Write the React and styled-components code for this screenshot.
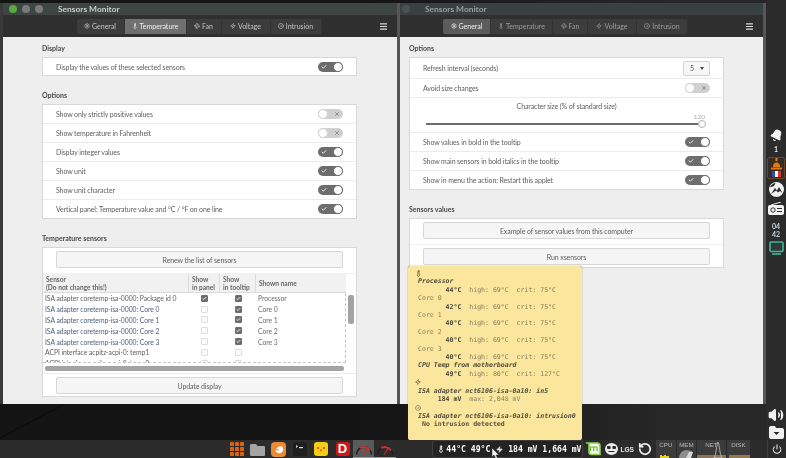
import React from 'react';
import styled, { createGlobalStyle } from 'styled-components';
import { Settings, Thermometer, Fan, Zap, CircleDot, Menu, Check, X, Bell, RotateCcw, Power, Volume2 } from 'lucide-react';

const uiFont = 'Lato, "Noto Sans", sans-serif';
const monoFont = '"DejaVu Sans Mono", "Liberation Mono", monospace';

const GlobalStyle = createGlobalStyle`
  html, body { margin: 0; padding: 0; background: #151515; }
  body { font-family: ${uiFont}; overflow: hidden; }
`;

const Desktop = styled.div`
  position: relative;
  width: 786px;
  height: 458px;
  overflow: hidden;
  display: grid;
  grid-template-columns: 766px 20px;
  grid-template-rows: 440px 18px;
  background:
    linear-gradient(152deg, transparent 49.9%, #0a0a0a 50%, transparent 50.2%),
    linear-gradient(90deg, #141414 45%, #272727 85%);
  filter: blur(0.3px);
`;

const Workspace = styled.main`
  position: relative;
`;

const WindowFrame = styled.section`
  position: absolute;
  top: 3px;
  left: ${(p) => p.$left}px;
  width: ${(p) => p.$width}px;
  height: 401px;
  z-index: ${(p) => (p.$active ? 2 : 1)};
  display: flex;
  flex-direction: column;
  background: #eeeeee;
  box-shadow: -3px 0 0 #3a3a3a, 3px 0 0 #565656;
`;

const TitleBar = styled.header`
  height: 12px;
  display: flex;
  align-items: center;
  padding-left: 6px;
  background: ${(p) => (p.$active ? '#3e4644' : '#38413f')};
`;

const Dot = styled.span`
  width: 8px;
  height: 8px;
  border-radius: 50%;
  margin-right: 5px;
  background: ${(p) => p.$color};
`;

const Title = styled.span`
  margin-left: 10px;
  font-size: 8.4px;
  font-weight: 700;
  color: ${(p) => (p.$active ? '#c9cdcb' : '#9a9f9d')};
`;

const HeaderBar = styled.div`
  height: 22px;
  display: grid;
  grid-template-columns: 1fr auto 1fr;
  align-items: center;
  padding-right: 2px;
  background: #2f2f2f;
`;

const Tabs = styled.nav`
  grid-column: 2;
  display: flex;
  height: 15px;
  border-radius: 2px;
  overflow: hidden;
  background: #3c3c3c;
`;

const Tab = styled.div`
  width: ${(p) => p.$width}px;
  display: flex;
  align-items: center;
  justify-content: center;
  gap: 2px;
  font-size: 7px;
  color: ${(p) => (p.$selected ? '#f0f0f0' : p.$dim ? '#9c9c9c' : '#c4c4c4')};
  background: ${(p) => (p.$selected ? (p.$dim ? '#5c5c5c' : '#707070') : 'transparent')};
  border-right: 1px solid #333;
`;

const Hamburger = styled.div`
  grid-column: 3;
  justify-self: end;
  margin-right: 7px;
  display: flex;
  color: #dddddd;
`;

const Body = styled.div`
  flex: 1;
  display: flex;
  flex-direction: column;
  gap: 14px;
  padding: 6px 0 0 39px;
`;

const Section = styled.div`
  display: flex;
  flex-direction: column;
`;

const Heading = styled.h3`
  margin: 0 0 4px;
  font-size: 7px;
  line-height: 10px;
  font-weight: 700;
  color: #4a4a4a;
`;

const Frame = styled.div`
  width: 315px;
  box-sizing: border-box;
  background: #ffffff;
  border: 1px solid #d8d8d8;
`;

const Row = styled.div`
  height: ${(p) => p.$height || 19}px;
  box-sizing: border-box;
  display: flex;
  align-items: center;
  justify-content: space-between;
  padding: 0 13px;
  font-size: 7px;
  letter-spacing: -0.12px;
  color: #5f5f5f;
  border-bottom: 1px solid #ececec;
  &:last-child { border-bottom: 0; height: ${(p) => (p.$height || 19) - 1}px; }
`;

const SwitchTrack = styled.span`
  width: 25px;
  height: 10px;
  border-radius: 5px;
  display: flex;
  align-items: center;
  justify-content: space-between;
  flex-direction: ${(p) => (p.$on ? 'row' : 'row-reverse')};
  box-sizing: border-box;
  padding-left: ${(p) => (p.$on ? 3 : 0)}px;
  padding-right: ${(p) => (p.$on ? 0 : 3)}px;
  background: ${(p) => (p.$on ? '#6d6d6d' : '#d0d0d0')};
  color: ${(p) => (p.$on ? '#ffffff' : '#777777')};
`;

const Knob = styled.span`
  width: 10px;
  height: 10px;
  border-radius: 50%;
  box-sizing: border-box;
  background: #ffffff;
  border: 1px solid ${(p) => (p.$on ? '#6d6d6d' : '#d0d0d0')};
`;

const Switch = ({ on }) => (
  <SwitchTrack $on={on}>
    {on ? <Check size={6} strokeWidth={3.5} /> : <X size={6} strokeWidth={3} />}
    <Knob $on={on} />
  </SwitchTrack>
);

const SelectBox = styled.div`
  width: 27px;
  height: 15px;
  box-sizing: border-box;
  display: flex;
  align-items: center;
  justify-content: space-between;
  padding: 0 5px 0 6px;
  border: 1px solid #d4d4d4;
  border-radius: 2px;
  background: #f7f7f7;
  color: #555555;
`;

const SelectCaret = styled.span`
  width: 0;
  height: 0;
  border-left: 2.5px solid transparent;
  border-right: 2.5px solid transparent;
  border-top: 3px solid #444444;
`;

const SliderRow = styled.div`
  height: 35px;
  box-sizing: border-box;
  padding-top: 3px;
  border-bottom: 1px solid #ececec;
`;

const SliderLabel = styled.div`
  font-size: 7px;
  letter-spacing: -0.12px;
  line-height: 10px;
  text-align: center;
  color: #5f5f5f;
`;

const SliderValue = styled.div`
  width: 279px;
  margin: 2px 0 0 16px;
  font-size: 6.5px;
  line-height: 8px;
  text-align: right;
  color: #aaaaaa;
`;

const SliderTrack = styled.div`
  position: relative;
  width: 276px;
  height: 2px;
  margin: 2px 0 0 16px;
  background: #6d6d6d;
`;

const SliderHandle = styled.span`
  position: absolute;
  right: -4px;
  top: -3px;
  width: 8px;
  height: 8px;
  border-radius: 50%;
  box-sizing: border-box;
  background: #fafafa;
  border: 1px solid #b5b5b5;
`;

const ButtonRow = styled.div`
  padding: 3px 13px 5px;
  &:last-child { padding-bottom: 2px; }
  border-bottom: 1px solid #f2f2f2;
  &:last-child { border-bottom: 0; }
`;

const Button = styled.div`
  height: 17px;
  box-sizing: border-box;
  display: flex;
  align-items: center;
  justify-content: center;
  font-size: 7px;
  letter-spacing: -0.1px;
  color: #5f5f5f;
  background: #f5f5f5;
  border: 1px solid #d6d6d6;
  border-radius: 2px;
`;

const TableBlock = styled.div`
  height: 100px;
  box-sizing: border-box;
  border-bottom: 1px solid #ececec;
`;

const TableTop = styled.div`
  display: flex;
  height: 89px;
`;

const TableView = styled.div`
  width: 303px;
  height: 89px;
  overflow: hidden;
  display: flex;
  flex-direction: column;
`;

const tableColumns = '146px 31px 36px 90px';

const TableHead = styled.div`
  flex: none;
  height: 19px;
  display: grid;
  grid-template-columns: ${tableColumns};
  background: #f1f1f1;
  border-bottom: 1px solid #dcdcdc;
  box-sizing: border-box;
`;

const HeadCell = styled.div`
  display: flex;
  flex-direction: column;
  justify-content: center;
  padding-left: 3px;
  font-size: 6.6px;
  line-height: 8px;
  font-weight: 700;
  white-space: nowrap;
  color: #666666;
  border-right: 1px solid #dcdcdc;
  &:last-child { border-right: 0; }
`;

const TableBody = styled.div`
  flex: 1;
  overflow: hidden;
  border-right: 1px dashed #c4c4c4;
  border-bottom: 1px dashed #c4c4c4;
`;

const TableRow = styled.div`
  height: 10.8px;
  display: grid;
  grid-template-columns: ${tableColumns};
  align-items: center;
  font-size: 6.8px;
  letter-spacing: -0.06px;
  color: ${(p) => (p.$link ? '#50617c' : '#5f5f5f')};
`;

const SensorCell = styled.span`
  padding-left: 2px;
  white-space: nowrap;
`;

const CheckCell = styled.span`
  display: flex;
  justify-content: center;
`;

const NameCell = styled.span`
  padding-left: 2px;
  color: #6d6d6d;
`;

const CheckBox = styled.span`
  width: 7px;
  height: 7px;
  box-sizing: border-box;
  display: flex;
  align-items: center;
  justify-content: center;
  border-radius: 1px;
  color: #ffffff;
  background: ${(p) => (p.$on ? '#6d6d6d' : '#fbfbfb')};
  border: 1px solid ${(p) => (p.$on ? '#6d6d6d' : '#dddddd')};
`;

const VThumb = styled.div`
  width: 6px;
  height: 29px;
  margin: 21px 0 0 2px;
  border-radius: 2px;
  background: #a3a3a3;
`;

const HThumb = styled.div`
  width: 299px;
  height: 5px;
  margin: 3px 0 0 2px;
  border-radius: 2px;
  background: #a3a3a3;
`;

const Tooltip = styled.aside`
  position: absolute;
  left: 408px;
  top: 266px;
  z-index: 3;
  width: 174px;
  height: 174px;
  box-sizing: border-box;
  padding: 3px 0 0 10px;
  background: #fbe69d;
  border-radius: 2px;
  box-shadow: 0 0 1px #333;
  font-family: ${monoFont};
  font-size: 6.55px;
`;

const TipLine = styled.div`
  height: 8.42px;
  line-height: 8.42px;
  white-space: pre;
  color: #85805f;
  font-style: ${(p) => (p.$main ? 'italic' : 'normal')};
  font-weight: ${(p) => (p.$main || p.$bold ? 700 : 400)};
  ${(p) => p.$main && 'color: #4f4c3d;'}
  ${(p) => p.$bold && 'color: #55523f;'}
`;

const TipIcon = styled.div`
  height: 8.42px;
  margin-left: -3px;
  display: flex;
  align-items: center;
  color: #55523f;
`;

const TipValue = styled.b`
  color: #45433a;
`;

const SidePanel = styled.aside`
  grid-row: 1;
  grid-column: 2;
  display: flex;
  flex-direction: column;
  align-items: center;
  padding-top: 129px;
  background: #2b2b2b;
  color: #f2f2f2;
`;

const SideCount = styled.span`
  margin-top: 3px;
  font-size: 7px;
  line-height: 8px;
  font-weight: 700;
  color: #dfe4ea;
`;

const StationBox = styled.div`
  width: 18px;
  height: 22px;
  margin-top: 4px;
  box-sizing: border-box;
  display: flex;
  flex-direction: column;
  align-items: center;
  border: 1px solid #6b4526;
  border-radius: 2px;
  background: #352c24;
`;

const SideClock = styled.span`
  margin-top: 7px;
  font-size: 7px;
  line-height: 8px;
  font-weight: 700;
  text-align: center;
  color: #c6d2de;
`;

const SideBottom = styled.div`
  margin-top: auto;
  padding-bottom: 1.5px;
  display: flex;
  flex-direction: column;
  align-items: center;
  gap: 2.5px;
`;

const BottomPanel = styled.footer`
  grid-row: 2;
  grid-column: 1 / 3;
  z-index: 2;
  display: flex;
  align-items: center;
  padding-left: 226px;
  background: #2b2b2b;
  position: relative;
`;

const Launcher = styled.div`
  width: 21.2px;
  height: 18px;
  display: flex;
  align-items: center;
  justify-content: center;
  background: ${(p) => (p.$active ? '#5a5a5a' : 'transparent')};
  border-bottom: ${(p) => (p.$running ? '1px solid #9a9a9a' : '0')};
  box-sizing: border-box;
`;

const RedD = styled.span`
  width: 14px;
  height: 14px;
  border-radius: 3px;
  background: #d01818;
  color: #ffffff;
  font-family: "Liberation Sans", sans-serif;
  font-size: 13px;
  font-weight: 700;
  line-height: 14px;
  text-align: center;
`;

const SensorApplet = styled.div`
  position: relative;
  margin-left: 36px;
  width: 151px;
  height: 18px;
  box-sizing: border-box;
  display: flex;
  align-items: center;
  padding-left: 3px;
  border: 1px solid #3f3f3f;
  border-radius: 3px;
  background: #232323;
  color: #ffffff;
  font-family: ${monoFont};
  font-size: 8.15px;
  font-weight: 700;
  white-space: pre;
`;

const AppletIcon = styled.span`
  width: ${(p) => p.$width}px;
  display: flex;
  justify-content: center;
  color: #e4e4e4;
`;

const Cursor = styled.svg`
  position: absolute;
  left: 59px;
  top: 7px;
`;

const TrayIcon = styled.div`
  margin-left: ${(p) => p.$gap}px;
  display: flex;
  align-items: center;
  color: #f0f0f0;
`;

const LgsText = styled.span`
  font-family: "Liberation Sans", sans-serif;
  font-size: 6.5px;
  font-weight: 700;
  color: #e8e8e8;
`;

const Graphs = styled.div`
  margin-left: 4px;
  display: flex;
  gap: 1px;
`;

const Graph = styled.div`
  position: relative;
  width: ${(p) => p.$width}px;
  height: 18px;
  overflow: hidden;
  background: #3b3b3b;
  text-align: center;
  font-family: "Liberation Sans", sans-serif;
  font-size: 6.2px;
  line-height: 9px;
  color: #b8b8b8;
`;

const GraphFill = styled.svg`
  position: absolute;
  left: 0;
  bottom: 0;
`;

const PanelEnd = styled.div`
  margin-left: auto;
  width: 18px;
  height: 18px;
  display: flex;
  align-items: center;
  justify-content: center;
  border-left: 1px solid #3d3d3d;
  color: #e8e8e8;
`;

const tabList = [
  { name: 'General', width: 47, Icon: Settings },
  { name: 'Temperature', width: 61, Icon: Thermometer },
  { name: 'Fan', width: 34, Icon: Fan },
  { name: 'Voltage', width: 48, Icon: Zap },
  { name: 'Intrusion', width: 50, Icon: CircleDot },
];

const sensorRows = [
  ['ISA adapter coretemp-isa-0000: Package id 0', true, true, 'Processor', false],
  ['ISA adapter coretemp-isa-0000: Core 0', false, true, 'Core 0', true],
  ['ISA adapter coretemp-isa-0000: Core 1', false, true, 'Core 1', true],
  ['ISA adapter coretemp-isa-0000: Core 2', false, true, 'Core 2', true],
  ['ISA adapter coretemp-isa-0000: Core 3', false, true, 'Core 3', true],
  ['ACPI interface acpitz-acpi-0: temp1', false, false, '', false],
  ['ACPI interface acpitz-acpi-0: temp2', false, false, '', false],
];

const tempOptions = [
  ['Show only strictly positive values', false],
  ['Show temperature in Fahrenheit', false],
  ['Display integer values', true],
  ['Show unit', true],
  ['Show unit character', true],
  ['Vertical panel: Temperature value and °C / °F on one line', true],
];

const generalOptions = [
  ['Show values in bold in the tooltip', true],
  ['Show main sensors in bold italics in the tooltip', true],
  ['Show in menu the action: Restart this applet', true],
];

const tempLines = [
  ['Processor', true, '44', '69', '75'],
  ['Core 0', false, '42', '69', '75'],
  ['Core 1', false, '40', '69', '75'],
  ['Core 2', false, '40', '69', '75'],
  ['Core 3', false, '40', '69', '75'],
  ['CPU Temp from motherboard', true, '49', '80', '127'],
];

function AppWindow({ left, width, active, selected, children }) {
  return (
    <WindowFrame $left={left} $width={width} $active={active}>
      <TitleBar $active={active}>
        <Dot $color={active ? '#5aa83f' : '#4b5250'} />
        <Dot $color={active ? '#7a7a7a' : '#4b5250'} />
        <Dot $color={active ? '#7a7a7a' : '#4b5250'} />
        <Title $active={active}>Sensors Monitor</Title>
      </TitleBar>
      <HeaderBar>
        <Tabs>
          {tabList.map(({ name, width: w, Icon }) => (
            <Tab key={name} $width={w} $selected={name === selected} $dim={!active}>
              <Icon size={6} strokeWidth={2.5} />
              {name}
            </Tab>
          ))}
        </Tabs>
        <Hamburger><Menu size={9} strokeWidth={3} /></Hamburger>
      </HeaderBar>
      <Body>{children}</Body>
    </WindowFrame>
  );
}

function TemperatureWindow() {
  return (
    <AppWindow left={3} width={394} active selected="Temperature">
      <Section>
        <Heading>Display</Heading>
        <Frame>
          <Row $height={18}>Display the values of these selected sensors<Switch on /></Row>
        </Frame>
      </Section>
      <Section>
        <Heading>Options</Heading>
        <Frame>
          {tempOptions.map(([label, on]) => (
            <Row key={label}>{label}<Switch on={on} /></Row>
          ))}
        </Frame>
      </Section>
      <Section>
        <Heading>Temperature sensors</Heading>
        <Frame>
          <ButtonRow><Button>Renew the list of sensors</Button></ButtonRow>
          <TableBlock>
            <TableTop>
              <TableView>
                <TableHead>
                  <HeadCell><span>Sensor</span><span>(Do not change this!)</span></HeadCell>
                  <HeadCell><span>Show</span><span>in panel</span></HeadCell>
                  <HeadCell><span>Show</span><span>in tooltip</span></HeadCell>
                  <HeadCell>Shown name</HeadCell>
                </TableHead>
                <TableBody>
                  {sensorRows.map(([sensor, panel, tip, name, link]) => (
                    <TableRow key={sensor} $link={link}>
                      <SensorCell>{sensor}</SensorCell>
                      <CheckCell><CheckBox $on={panel}>{panel && <Check size={5} strokeWidth={4} />}</CheckBox></CheckCell>
                      <CheckCell><CheckBox $on={tip}>{tip && <Check size={5} strokeWidth={4} />}</CheckBox></CheckCell>
                      <NameCell>{name}</NameCell>
                    </TableRow>
                  ))}
                </TableBody>
              </TableView>
              <VThumb />
            </TableTop>
            <HThumb />
          </TableBlock>
          <ButtonRow><Button>Update display</Button></ButtonRow>
        </Frame>
      </Section>
    </AppWindow>
  );
}

function GeneralWindow() {
  return (
    <AppWindow left={370} width={393} selected="General">
      <Section>
        <Heading>Options</Heading>
        <Frame>
          <Row $height={21}>
            Refresh interval (seconds)
            <SelectBox>5<SelectCaret /></SelectBox>
          </Row>
          <Row>Avoid size changes<Switch on={false} /></Row>
          <SliderRow>
            <SliderLabel>Character size (% of standard size)</SliderLabel>
            <SliderValue>120</SliderValue>
            <SliderTrack><SliderHandle /></SliderTrack>
          </SliderRow>
          {generalOptions.map(([label, on]) => (
            <Row key={label}>{label}<Switch on={on} /></Row>
          ))}
        </Frame>
      </Section>
      <Section>
        <Heading>Sensors values</Heading>
        <Frame>
          <ButtonRow><Button>Example of sensor values from this computer</Button></ButtonRow>
          <ButtonRow><Button>Run xsensors</Button></ButtonRow>
        </Frame>
      </Section>
    </AppWindow>
  );
}

function SensorTooltip() {
  return (
    <Tooltip>
      <TipIcon><Thermometer size={7} strokeWidth={2.5} /></TipIcon>
      {tempLines.map(([name, main, temp, high, crit]) => (
        <React.Fragment key={name}>
          <TipLine $main={main}>{name}</TipLine>
          <TipLine>{'       '}<TipValue>{temp}°C</TipValue>{`  high: ${high}°C  crit: ${crit}°C`}</TipLine>
        </React.Fragment>
      ))}
      <TipIcon><Zap size={6} strokeWidth={2.5} /></TipIcon>
      <TipLine $main>ISA adapter nct6106-isa-0a10: in5</TipLine>
      <TipLine>{'     '}<TipValue>184 mV</TipValue>{'  max: 2,048 mV'}</TipLine>
      <TipIcon><CircleDot size={6} strokeWidth={2} /></TipIcon>
      <TipLine $main>ISA adapter nct6106-isa-0a10: intrusion0</TipLine>
      <TipLine $bold>{' No intrusion detected'}</TipLine>
    </Tooltip>
  );
}

const GridIcon = () => (
  <svg width="14" height="14" viewBox="0 0 14 14" fill="#d9630f">
    {[0, 5, 10].map((y) => [0, 5, 10].map((x) => (
      <rect key={`${x}-${y}`} x={x} y={y} width="4" height="4" rx="0.5" />
    )))}
  </svg>
);

const FolderIcon = () => (
  <svg width="15" height="13" viewBox="0 0 15 13">
    <path d="M1 1h5l1.5 2H14a1 1 0 0 1 1 1v8a1 1 0 0 1-1 1H1a1 1 0 0 1-1-1V2a1 1 0 0 1 1-1z" fill="#a4a4a4" />
  </svg>
);

const FirefoxIcon = () => (
  <svg width="15" height="15" viewBox="0 0 15 15">
    <rect width="15" height="15" rx="4" fill="#ea8a35" />
    <path d="M10.5 4a4 4 0 1 1-6.3 3.5c.8 1.2 3.7 1.4 4.2-.3H5.6c0-1.4 1.7-1.7 2.4-2.6.8 0 1.8 0 2.5-.6z" fill="#fff" />
  </svg>
);

const TerminalIcon = () => (
  <svg width="14" height="14" viewBox="0 0 14 14">
    <rect width="14" height="14" rx="2.5" fill="#1f1f1f" />
    <path d="M3 3l2 1.5L3 6z" fill="#d8d8d8" />
    <rect x="6" y="5" width="4" height="1.2" fill="#d8d8d8" />
  </svg>
);

const YellowIcon = () => (
  <svg width="14" height="14" viewBox="0 0 14 14">
    <rect width="14" height="14" rx="3" fill="#f6cd16" />
    <circle cx="4" cy="6" r="1.1" fill="#d93a1a" />
    <circle cx="10" cy="6" r="1.1" fill="#d93a1a" />
    <path d="M6 7.5h2L7 10z" fill="#d93a1a" />
  </svg>
);

const GaugeIcon = () => (
  <svg width="18" height="15" viewBox="0 0 18 15" fill="none">
    <path d="M1.5 13.5a7.5 7.5 0 0 1 15 0" stroke="#1c1c1c" strokeWidth="1.6" />
    <path d="M5 7a7.5 7.5 0 0 1 10 2.5" stroke="#d82c2c" strokeWidth="1.8" />
    <path d="M8 13.5L13 6" stroke="#c92a2a" strokeWidth="1.2" />
  </svg>
);

const MintIcon = () => (
  <svg width="16" height="15" viewBox="0 0 16 15" fill="none">
    <path d="M1 1h3v9a2.5 2.5 0 0 0 2.5 2.5H15V4a3 3 0 0 0-3-3H1" stroke="#8fd14f" strokeWidth="1.6" fill="#f3f7ec" />
    <path d="M5.5 9V5h6.5v4M8.7 5v4" stroke="#6db52e" strokeWidth="1.2" />
  </svg>
);

const FaceIcon = () => (
  <svg width="13" height="12" viewBox="0 0 13 12">
    <ellipse cx="6.5" cy="6" rx="6.5" ry="6" fill="#ececec" />
    <rect x="2" y="3" width="3.6" height="3" rx="1" fill="#2b2b2b" />
    <rect x="7.4" y="3" width="3.6" height="3" rx="1" fill="#2b2b2b" />
    <path d="M3.5 8.5h6" stroke="#2b2b2b" strokeWidth="1" />
  </svg>
);

const MountainBadge = () => (
  <svg width="15" height="15" viewBox="0 0 15 15" style={{ marginTop: 3 }}>
    <circle cx="7.5" cy="7.5" r="7.5" fill="#f2f2f2" />
    <path d="M2 12l4-6 2 2.5L10 5l3.5 6-2.5-2-2 1.5-2-2z" fill="#2b2b2b" />
    <path d="M1 5.5A7 7 0 0 1 6.5 1L5 4z" fill="#2b2b2b" />
  </svg>
);

const RadioIcon = () => (
  <svg width="16" height="13" viewBox="0 0 16 13" style={{ marginTop: 5 }}>
    <path d="M3 3L13 0" stroke="#f2f2f2" strokeWidth="1" />
    <rect y="3" width="16" height="10" rx="2" fill="#f2f2f2" />
    <circle cx="5" cy="8" r="2.2" fill="none" stroke="#2b2b2b" strokeWidth="1" />
    <path d="M9 6.5h5M9 9.5h5" stroke="#2b2b2b" strokeWidth="1" />
  </svg>
);

const MonitorIcon = () => (
  <svg width="15" height="14" viewBox="0 0 15 14" fill="none" style={{ marginTop: 3 }}>
    <rect x="1" y="1" width="13" height="9.5" rx="1" stroke="#3fb795" strokeWidth="1.6" fill="#2f3a37" />
    <path d="M3 13h9" stroke="#3fb795" strokeWidth="1.6" />
  </svg>
);

const StationIcon = () => (
  <svg width="11" height="13" viewBox="0 0 11 13" fill="#e97a0e">
    <rect x="4.5" y="0" width="2" height="3" />
    <path d="M2 9a3.5 4.5 0 0 1 7 0z" />
    <rect y="9.5" width="11" height="2" rx="0.5" />
  </svg>
);

const FrenchFlag = () => (
  <svg width="9" height="6" viewBox="0 0 9 6">
    <rect width="3" height="6" fill="#2a4fa3" />
    <rect x="3" width="3" height="6" fill="#f4f4f4" />
    <rect x="6" width="3" height="6" fill="#d8343a" />
  </svg>
);

const DriveIcon = () => (
  <svg width="15" height="13" viewBox="0 0 15 13">
    <path d="M2 0h4l1 2h6a2 2 0 0 1 2 2v7a2 2 0 0 1-2 2H2a2 2 0 0 1-2-2V2a2 2 0 0 1 2-2z" fill="#f2f2f2" />
    <path d="M4.5 6h6L7.5 9z" fill="#2b2b2b" />
  </svg>
);

export default function App() {
  return (
    <Desktop>
      <GlobalStyle />
      <Workspace>
        <GeneralWindow />
        <TemperatureWindow />
        <SensorTooltip />
      </Workspace>
      <SidePanel>
        <Bell size={13} fill="#f2f2f2" style={{ transform: 'rotate(25deg)' }} />
        <SideCount>1</SideCount>
        <StationBox><StationIcon /><FrenchFlag /></StationBox>
        <MountainBadge />
        <RadioIcon />
        <SideClock>04<br />42</SideClock>
        <MonitorIcon />
        <SideBottom>
          <Volume2 size={16} fill="#f2f2f2" />
          <DriveIcon />
        </SideBottom>
      </SidePanel>
      <BottomPanel>
        <Launcher><GridIcon /></Launcher>
        <Launcher><FolderIcon /></Launcher>
        <Launcher><FirefoxIcon /></Launcher>
        <Launcher><TerminalIcon /></Launcher>
        <Launcher><YellowIcon /></Launcher>
        <Launcher><RedD>D</RedD></Launcher>
        <Launcher $active $running><GaugeIcon /></Launcher>
        <Launcher $running><GaugeIcon /></Launcher>
        <SensorApplet>
          <AppletIcon $width={11}><Thermometer size={8} strokeWidth={3} /></AppletIcon>
          {'44°C 49°C'}
          <AppletIcon $width={18}><Zap size={7} fill="#e4e4e4" /></AppletIcon>
          {'184 mV 1,664 mV'}
          <Cursor width="8" height="11" viewBox="0 0 8 11">
            <path d="M0 0l7 7H4l2 4-2 0-2-4-2 2z" fill="#f4f4f4" stroke="#222" strokeWidth="0.5" />
          </Cursor>
        </SensorApplet>
        <TrayIcon $gap={2}><MintIcon /></TrayIcon>
        <TrayIcon $gap={4}><FaceIcon /></TrayIcon>
        <TrayIcon $gap={3}><LgsText>LGS</LgsText></TrayIcon>
        <TrayIcon $gap={4}><RotateCcw size={14} strokeWidth={3} /></TrayIcon>
        <Graphs>
          <Graph $width={20}>CPU
            <GraphFill width="20" height="5" viewBox="0 0 20 5"><path d="M4 5V2h2v1h2v-1h2v1h3v2z" fill="#e5cf22" /></GraphFill>
          </Graph>
          <Graph $width={19}>MEM
            <GraphFill width="19" height="9" viewBox="0 0 19 9"><path d="M2 9a8 8 0 0 1 7-8l6 1-3 7z" fill="#8d8d8d" /><path d="M9 9l3-6 4 0-2 6z" fill="#d8d8d8" /></GraphFill>
          </Graph>
          <Graph $width={29}>NET
            <GraphFill width="29" height="18" viewBox="0 0 29 18"><rect y="15" width="29" height="3" fill="#8b7355" /><path d="M17 18C19 16 20 2 21 2s2 14 4 16z" fill="none" stroke="#d4d4d4" strokeWidth="0.7" /></GraphFill>
          </Graph>
          <Graph $width={23}>DISK
            <GraphFill width="23" height="3" viewBox="0 0 23 3"><rect x="2" width="21" height="3" fill="#94794a" /></GraphFill>
          </Graph>
        </Graphs>
        <PanelEnd><Power size={10} strokeWidth={2.5} /></PanelEnd>
      </BottomPanel>
    </Desktop>
  );
}
